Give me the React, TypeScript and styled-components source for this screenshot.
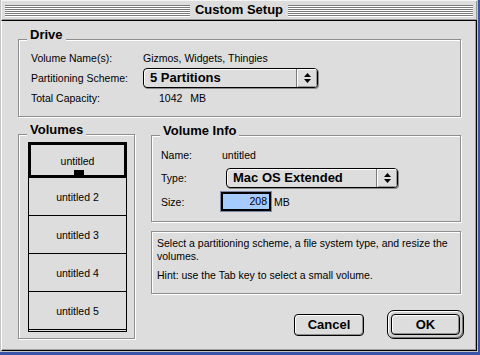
import React from "react";
import styled, { createGlobalStyle } from "styled-components";

const GlobalStyle = createGlobalStyle`
  html, body {
    margin: 0;
    padding: 0;
    background: #3a55a8;
  }
  body {
    width: 480px;
    height: 355px;
    overflow: hidden;
    font-family: "Liberation Sans", Arial, sans-serif;
    font-size: 10.5px;
    color: #000;
  }
  * { box-sizing: border-box; }
`;

const volumes = ["untitled", "untitled 2", "untitled 3", "untitled 4", "untitled 5"];

const UpDown = () => (
  <svg width="7" height="10" viewBox="0 0 7 10">
    <polygon points="3.5,0 7,4 0,4" fill="#000" />
    <polygon points="0,6 7,6 3.5,10" fill="#000" />
  </svg>
);

const PopupMenu = ({ label, width }: { label: string; width: number }) => (
  <Popup $width={width}>
    <PopupLabel>{label}</PopupLabel>
    <PopupArrow>
      <UpDown />
    </PopupArrow>
  </Popup>
);

export default function App() {
  return (
    <>
      <GlobalStyle />
      <Window>
        <TitleBar>
          <Stripes />
          <Title>Custom Setup</Title>
          <Stripes />
        </TitleBar>
        <Content>
          <DriveGroup>
            <GroupTitle>Drive</GroupTitle>
            <Label>Volume Name(s):</Label>
            <Value>Gizmos, Widgets, Thingies</Value>
            <Label>Partitioning Scheme:</Label>
            <PopupMenu label="5 Partitions" width={175} />
            <Label>Total Capacity:</Label>
            <Value $indent={16}>
              1042<Unit>MB</Unit>
            </Value>
          </DriveGroup>

          <Lower>
            <VolumesGroup>
              <GroupTitle>Volumes</GroupTitle>
              <VolumeList>
                {volumes.map((v, i) => (
                  <VolumeItem key={v} $selected={i === 0}>
                    {v}
                  </VolumeItem>
                ))}
              </VolumeList>
            </VolumesGroup>

            <RightColumn>
              <InfoGroup>
                <GroupTitle>Volume Info</GroupTitle>
                <Label>Name:</Label>
                <Value $indent={1}>untitled</Value>
                <Label>Type:</Label>
                <PopupWrap>
                  <PopupMenu label="Mac OS Extended" width={172} />
                </PopupWrap>
                <Label>Size:</Label>
                <SizeRow>
                  <SizeField>208</SizeField>
                  <span>MB</span>
                </SizeRow>
              </InfoGroup>

              <HelpBox>
                <p>Select a partitioning scheme, a file system type, and resize the volumes.</p>
                <p>Hint: use the Tab key to select a small volume.</p>
              </HelpBox>

              <ButtonRow>
                <Button $width={70} $height={22}>Cancel</Button>
                <DefaultRing>
                  <Button $width={69} $height={21}>OK</Button>
                </DefaultRing>
              </ButtonRow>
            </RightColumn>
          </Lower>
        </Content>
      </Window>
    </>
  );
}

const Window = styled.div`
  width: 478px;
  height: 352px;
  display: flex;
  flex-direction: column;
  background: #c4c4c4;
  padding: 0 1px 1px 1px;
`;

const TitleBar = styled.div`
  height: 20px;
  display: flex;
  align-items: center;
  padding: 0 4px;
  background: #dddddd;
  box-shadow: inset 1px 1px 0 #f4f4f4, inset -1px -1px 0 #999;
`;

const Stripes = styled.div`
  flex: 1;
  height: 12px;
  margin-top: 1px;
  background: repeating-linear-gradient(
    to bottom,
    #7a7a7a 0px,
    #7a7a7a 1px,
    #ffffff 1px,
    #ffffff 2px
  );
`;

const Title = styled.div`
  padding: 0 5px;
  font-weight: bold;
  font-size: 13px;
  line-height: 14px;
`;

const Content = styled.div`
  flex: 1;
  background: #dddddd;
  border-top: 1px solid #000;
  border-right: 1px solid #000;
  border-bottom: 1px solid #000;
  border-left: 1px solid #fff;
  box-shadow: inset -1px -1px 0 #a0a0a0;
  padding: 18px 0 0 16px;
`;

const Group = styled.div`
  position: relative;
  border: 1px solid #8e8e8e;
  box-shadow: 1px 1px 0 #fff, inset 1px 1px 0 #fff;
`;

const GroupTitle = styled.div`
  position: absolute;
  top: -12px;
  left: 8px;
  padding: 0 3px;
  background: #dddddd;
  font-weight: bold;
  font-size: 13px;
  line-height: 13px;
`;

const DriveGroup = styled(Group)`
  width: 443px;
  height: 78px;
  padding: 8px 0 0 12px;
  display: grid;
  grid-template-columns: 112px auto;
  grid-auto-rows: 20px;
  align-items: center;
  align-content: start;
`;

const Label = styled.div`
  white-space: nowrap;
`;

const Value = styled.div<{ $indent?: number }>`
  white-space: nowrap;
  padding-left: ${(p) => p.$indent ?? 0}px;
`;

const Unit = styled.span`
  margin-left: 8px;
`;

const Popup = styled.div<{ $width: number }>`
  width: ${(p) => p.$width}px;
  height: 20px;
  display: flex;
  border: 1px solid #000;
  border-radius: 4px;
  background: #dddddd;
  box-shadow: inset 1px 1px 0 #fff, 1px 1px 0 #8a8a8a;
  overflow: hidden;
`;

const PopupLabel = styled.div`
  flex: 1;
  padding-left: 6px;
  font-weight: bold;
  font-size: 13px;
  line-height: 18px;
  white-space: nowrap;
`;

const PopupArrow = styled.div`
  width: 21px;
  display: flex;
  align-items: center;
  justify-content: center;
  border-left: 1px solid #7a7a7a;
  background: #dddddd;
  box-shadow: inset 1px 1px 0 #fff, inset -1px -1px 0 #9a9a9a;
`;

const Lower = styled.div`
  display: flex;
  gap: 16px;
  margin-top: 17px;
`;

const VolumesGroup = styled(Group)`
  width: 117px;
  height: 205px;
  padding: 7px 0 0 9px;
`;

const VolumeList = styled.div`
  width: 99px;
  height: 190px;
  border: 1px solid #000;
  border-top: none;
  background: #dddddd;
  overflow: hidden;
`;

const VolumeItem = styled.div<{ $selected?: boolean }>`
  position: relative;
  height: ${(p) => (p.$selected ? 36 : 38)}px;
  display: flex;
  align-items: center;
  justify-content: center;
  border-bottom: 1px solid #000;
  padding-top: ${(p) => (p.$selected ? 1 : 1)}px;
  ${(p) =>
    p.$selected &&
    `
    border: 3px solid #000;
    margin: 0 -1px;
    &::after {
      content: "";
      position: absolute;
      left: 43px;
      bottom: 0;
      width: 10px;
      height: 5px;
      background: #000;
    }
  `}
`;

const RightColumn = styled.div`
  width: 310px;
  display: flex;
  flex-direction: column;
`;

const InfoGroup = styled(Group)`
  margin-top: 1px;
  height: 87px;
  padding: 8px 0 0 9px;
  display: grid;
  grid-template-columns: 60px auto;
  grid-template-rows: 21px 25px 23px;
  align-items: center;
`;

const PopupWrap = styled.div`
  padding-left: 5px;
`;

const SizeRow = styled.div`
  display: flex;
  align-items: center;
  gap: 3px;
`;

const SizeField = styled.div`
  width: 50px;
  height: 19px;
  border: 2px solid #000;
  box-shadow: 0 0 0 1px #7d88a8;
  background: #a6cbff;
  text-align: right;
  padding-right: 2px;
  line-height: 15px;
`;

const HelpBox = styled(Group)`
  margin-top: 9px;
  height: 63px;
  padding: 5px 6px 0 5px;
  line-height: 13px;

  p {
    margin: 0;
  }
  p + p {
    margin-top: 6px;
  }
`;

const ButtonRow = styled.div`
  display: flex;
  justify-content: flex-end;
  align-items: center;
  gap: 23px;
  margin-top: 16px;
  margin-right: -3px;
`;

const Button = styled.button<{ $width: number; $height: number }>`
  width: ${(p) => p.$width}px;
  height: ${(p) => p.$height}px;
  border: 1px solid #000;
  border-radius: 4px;
  background: #dddddd;
  box-shadow: inset 1px 1px 0 #fff, inset -1px -1px 0 #8e8e8e;
  font-family: "Liberation Sans", Arial, sans-serif;
  font-weight: bold;
  font-size: 13px;
  color: #000;
  padding: 0;
`;

const DefaultRing = styled.div`
  width: 77px;
  height: 29px;
  padding: 3px;
  border: 1px solid #000;
  border-radius: 7px;
  background: #cfcfcf;
  box-shadow: inset 1px 1px 0 #fff, inset -1px -1px 0 #7a7a7a;
  display: flex;
`;
